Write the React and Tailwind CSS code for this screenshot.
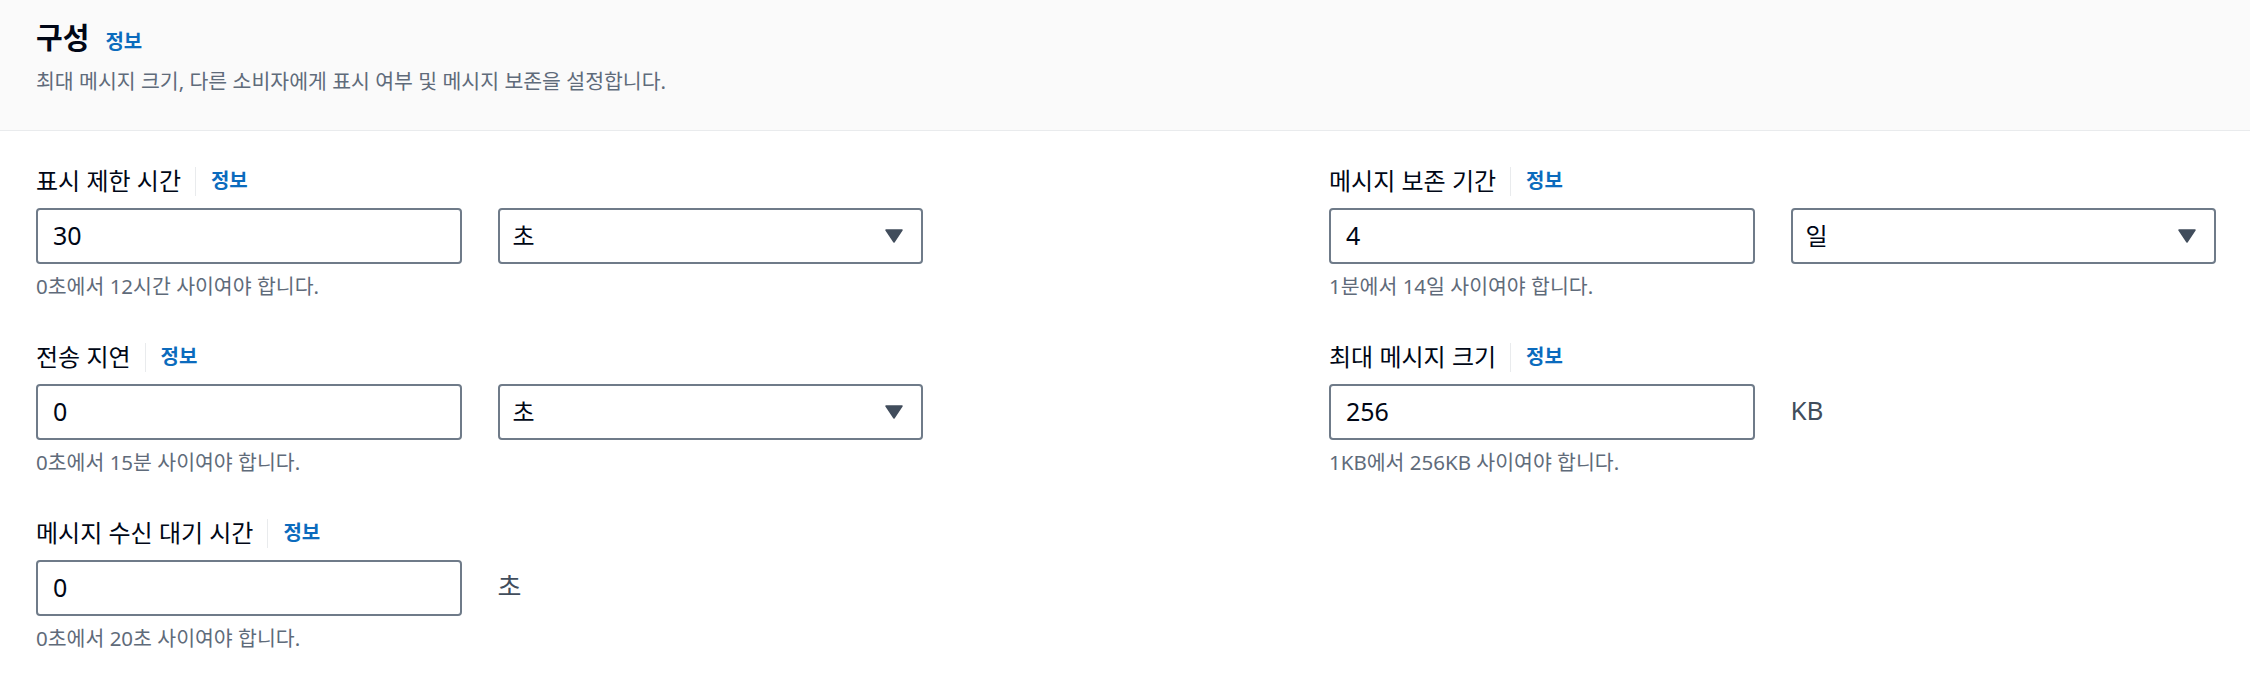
import React from "react";

function Caret() {
  return (
    <svg width="18" height="14" viewBox="0 0 18 14" className="shrink-0">
      <path d="M1 1 H17 L9 13 Z" fill="#414d5c" stroke="#414d5c" strokeWidth="1.5" strokeLinejoin="round" />
    </svg>
  );
}

function Field({ label, value, unit, select, hint }) {
  return (
    <div>
      <div className="flex items-center h-[30px]">
        <span className="text-[24px] leading-[30px] text-[#000716]">{label}</span>
        <span className="ml-[14px] w-px h-[29px] bg-[#e9ebed]" />
        <a className="ml-[15px] text-[20px] leading-[30px] font-bold text-[#0b6bbd] cursor-pointer">정보</a>
      </div>
      <div className="mt-[12px] grid grid-cols-2 gap-[36px]">
        <div className="h-[56px] border-2 border-[#6f7b89] rounded-[4px] px-[15px] flex items-center text-[25px] text-[#000716] bg-white">
          {value}
        </div>
        {select ? (
          <div className="h-[56px] border-2 border-[#6f7b89] rounded-[4px] pl-[13px] pr-[18px] flex items-center justify-between text-[24px] text-[#000716] bg-white">
            <span>{select}</span>
            <Caret />
          </div>
        ) : (
          <div className="h-[56px] flex items-center text-[26px] text-[#414d5c] pb-[4px]">{unit}</div>
        )}
      </div>
      <div className="mt-[8px] text-[20.5px] leading-[28px] text-[#5f6b7a]">{hint}</div>
    </div>
  );
}

export default function App() {
  return (
    <div className="w-[2250px] h-[688px] bg-white font-['Noto_Sans','Noto_Sans_CJK_KR',sans-serif]">
      <div className="h-[131px] bg-[#fafafa] border-b border-[#e9ebed] px-[36px] pt-[20px]">
        <div className="flex items-baseline">
          <h2 className="text-[29px] leading-[36px] font-bold text-[#000716]">구성</h2>
          <a className="ml-[16px] text-[20px] font-bold text-[#0b6bbd] cursor-pointer">정보</a>
        </div>
        <p className="mt-[10px] text-[20.5px] leading-[28px] text-[#5f6b7a]">
          최대 메시지 크기, 다른 소비자에게 표시 여부 및 메시지 보존을 설정합니다.
        </p>
      </div>
      <div className="grid grid-cols-2 gap-x-[406px] pl-[36px] pr-[34px] pt-[35px]">
        <div className="flex flex-col gap-[42px]">
          <Field label="표시 제한 시간" value="30" select="초" hint="0초에서 12시간 사이여야 합니다." />
          <Field label="전송 지연" value="0" select="초" hint="0초에서 15분 사이여야 합니다." />
          <Field label="메시지 수신 대기 시간" value="0" unit="초" hint="0초에서 20초 사이여야 합니다." />
        </div>
        <div className="flex flex-col gap-[42px]">
          <Field label="메시지 보존 기간" value="4" select="일" hint="1분에서 14일 사이여야 합니다." />
          <Field label="최대 메시지 크기" value="256" unit="KB" hint="1KB에서 256KB 사이여야 합니다." />
        </div>
      </div>
    </div>
  );
}
